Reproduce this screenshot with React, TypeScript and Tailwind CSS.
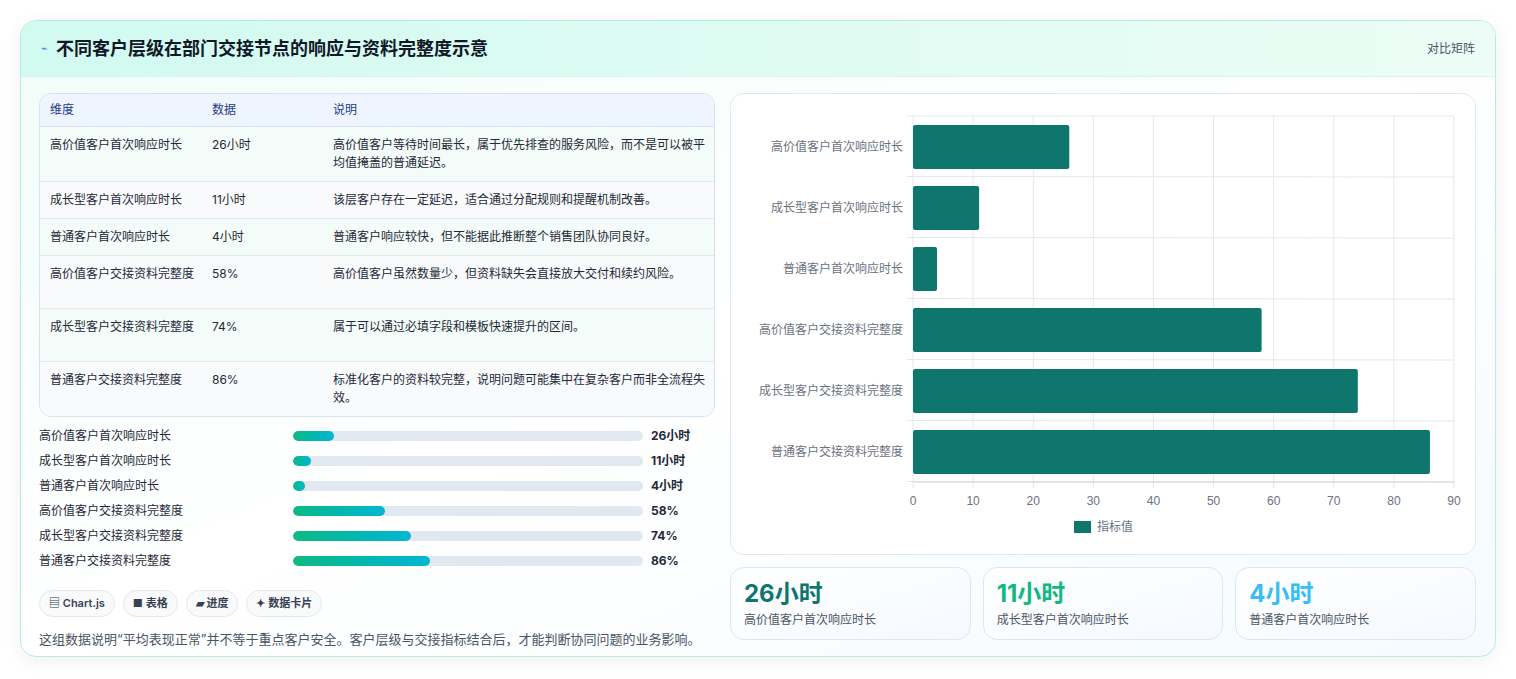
import React from "react";

const rows = [
  ["高价值客户首次响应时长", "26小时", "高价值客户等待时间最长，属于优先排查的服务风险，而不是可以被平均值掩盖的普通延迟。", 26],
  ["成长型客户首次响应时长", "11小时", "该层客户存在一定延迟，适合通过分配规则和提醒机制改善。", 11],
  ["普通客户首次响应时长", "4小时", "普通客户响应较快，但不能据此推断整个销售团队协同良好。", 4],
  ["高价值客户交接资料完整度", "58%", "高价值客户虽然数量少，但资料缺失会直接放大交付和续约风险。", 58],
  ["成长型客户交接资料完整度", "74%", "属于可以通过必填字段和模板快速提升的区间。", 74],
  ["普通客户交接资料完整度", "86%", "标准化客户的资料较完整，说明问题可能集中在复杂客户而非全流程失效。", 86],
] as const;

function Chart() {
  const x0 = 182, w = 541, top = 22, rowH = 61;
  return (
    <svg width="746" height="462" viewBox="0 0 746 462" className="block">
      {Array.from({ length: 10 }).map((_, i) => {
        const x = x0 + (w * i) / 9;
        return <g key={i}>
          <line x1={x} x2={x} y1={top} y2={top + rowH * 6 + 6} stroke="#e5e7eb" />
          <text x={x} y={411} textAnchor="middle" fontSize="12" fill="#6b7280" fontFamily="Liberation Sans, sans-serif">{i * 10}</text>
        </g>;
      })}
      {Array.from({ length: 7 }).map((_, i) => (
        <line key={i} x1={x0 - 6} x2={x0 + w} y1={top + rowH * i - 0.5 * (i > 0 ? 1 : 0)} y2={top + rowH * i} stroke="#e5e7eb" />
      ))}
      <line x1={x0} x2={x0 + w} y1={top + rowH * 6} y2={top + rowH * 6} stroke="#d1d5db" />
      {rows.map((r, i) => (
        <g key={i}>
          <rect x={x0} y={top + rowH * i + 9} width={(w * (r[3] as number)) / 90} height={44} rx={2} fill="#0f766e" />
          <text x={x0 - 10} y={top + rowH * i + 35} textAnchor="end" fontSize="12" fill="#6b7280" fontFamily="Noto Sans CJK SC, sans-serif">{r[0]}</text>
        </g>
      ))}
      <rect x={343} y={427} width={17} height={12} fill="#0f766e" />
      <text x={366} y={437} fontSize="12" fill="#6b7280" fontFamily="Noto Sans CJK SC, sans-serif">指标值</text>
    </svg>
  );
}

export default function App() {
  return (
    <div className="w-[1516px] h-[679px] bg-white p-[20px] pb-0" style={{ fontFamily: "Inter, 'Noto Sans CJK SC', sans-serif" }}>
      <div className="h-[637px] rounded-[16px] border border-[#b8ece0] shadow-[0_4px_20px_rgba(0,0,0,0.06)] overflow-hidden bg-gradient-to-br from-[#f0fdf8] via-white to-[#f5fbff]">
        <div className="h-[56px] flex items-center justify-between pl-[20px] pr-[20px] bg-gradient-to-r from-[#d1faf0] to-[#ecfdf5] border-b border-[#d8f3ec]">
          <div className="flex items-center gap-[8px]">
            <span className="text-[11px] text-[#3b82f6]">⌁</span>
            <span className="text-[18px] font-bold text-[#111827]">不同客户层级在部门交接节点的响应与资料完整度示意</span>
          </div>
          <span className="text-[12px] text-[#4b5563]">对比矩阵</span>
        </div>
        <div className="flex gap-[15px] px-[18px] pt-[16px]">
          <div className="w-[676px]">
            <div className="rounded-[12px] border border-[#d7e3ee] overflow-hidden text-[12px] text-[#1f2937] bg-[#f8fafc]">
              <div className="flex h-[33px] items-center bg-[#eef5fe] text-[#1e3a8a] border-b border-[#d7e3ee]">
                <div className="w-[172px] pl-[10px]">维度</div><div className="w-[121px]">数据</div><div className="flex-1">说明</div>
              </div>
              {rows.map((r, i) => (
                <div key={i} className={`flex py-[9px] leading-[18px] border-b last:border-b-0 border-[#e2e8f0] ${i % 2 === 0 ? "bg-[#f3fcf8]" : "bg-[#f8fafc]"} ${i === 0 || i === 5 ? "min-h-[53px]" : i === 3 || i === 4 ? "min-h-[53px]" : "min-h-[35px]"}`}>
                  <div className="w-[172px] pl-[10px] pr-[8px]">{r[0]}</div>
                  <div className="w-[121px]">{r[1]}</div>
                  <div className="flex-1 pr-[8px]">{r[2]}</div>
                </div>
              ))}
            </div>
            <div className="mt-[10px] flex flex-col gap-[7px]">
              {rows.map((r, i) => (
                <div key={i} className="flex items-center h-[18px] text-[12px]">
                  <div className="w-[254px] text-[#1f2937]">{r[0]}</div>
                  <div className="w-[350px] h-[10px] rounded-full bg-[#e2e8f0] overflow-hidden">
                    <div className="h-full rounded-full bg-gradient-to-r from-[#10b981] to-[#06b6d4]" style={{ width: `${Math.max(3.5, (r[3] as number) * 0.455)}%` }} />
                  </div>
                  <div className="pl-[8px] font-bold text-[#1f2937]">{r[1]}</div>
                </div>
              ))}
            </div>
            <div className="mt-[20px] flex gap-[8px] text-[11px] font-semibold text-[#374151]">
              {["▤ Chart.js", "■ 表格", "▰ 进度", "✦ 数据卡片"].map(c => (
                <span key={c} className="h-[27px] px-[9px] flex items-center rounded-full border border-[#e5e7eb] bg-[#f9fafb]">{c}</span>
              ))}
            </div>
            <p className="mt-[13px] text-[13px] text-[#4b5563]">这组数据说明“平均表现正常”并不等于重点客户安全。客户层级与交接指标结合后，才能判断协同问题的业务影响。</p>
          </div>
          <div className="w-[746px]">
            <div className="h-[462px] rounded-[14px] border border-[#e2e8f0] bg-white overflow-hidden"><Chart /></div>
            <div className="mt-[12px] grid grid-cols-3 gap-[12px]">
              {[["26小时", "text-[#0f766e]", rows[0][0]], ["11小时", "text-[#10b981]", rows[1][0]], ["4小时", "text-[#38bdf8]", rows[2][0]]].map(([v, c, l]) => (
                <div key={v} className="h-[73px] rounded-[14px] border border-[#dbe7f3] bg-gradient-to-br from-white to-[#f5f9ff] px-[13px] pt-[9px]">
                  <div className={`text-[24px] font-bold leading-[34px] ${c}`}>{v}</div>
                  <div className="text-[12px] text-[#4b5563]">{l}</div>
                </div>
              ))}
            </div>
          </div>
        </div>
      </div>
    </div>
  );
}
